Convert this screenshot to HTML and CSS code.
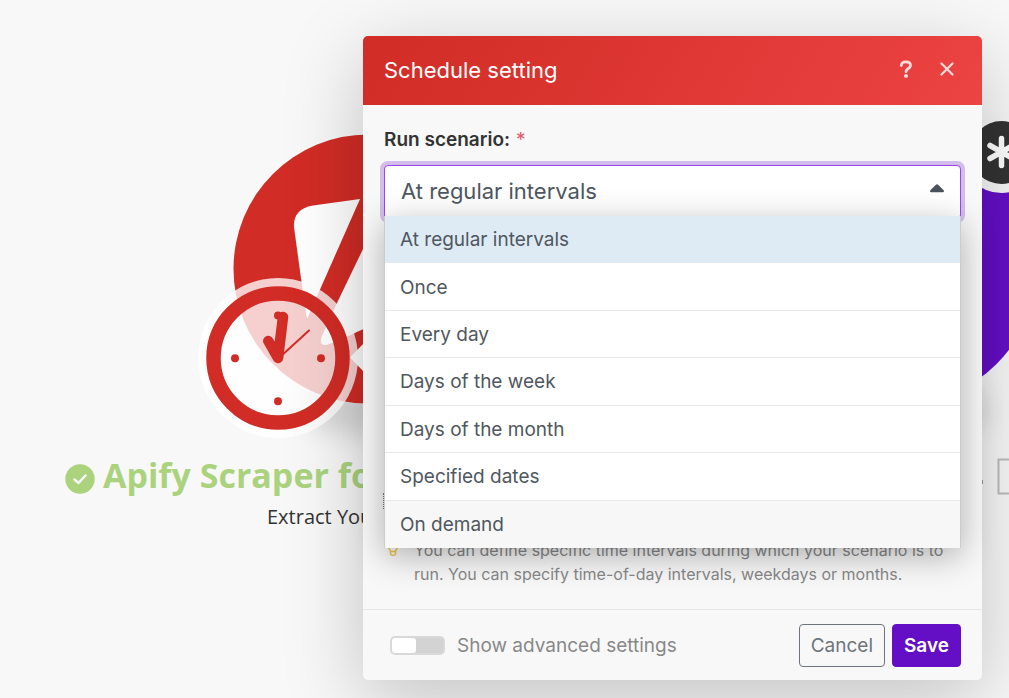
FILE: index.html
```html
<!DOCTYPE html>
<html lang="en">
<head>
<meta charset="utf-8">
<title>Schedule setting</title>
<link rel="stylesheet" href="styles.css">
</head>
<body>
<main class="stage">
  <div class="canvas">
    <svg class="canvas-art" width="1040" height="698" viewBox="0 0 1040 698" aria-hidden="true">
      <defs>
        <filter id="soft" x="-50%" y="-50%" width="200%" height="200%"><feGaussianBlur stdDeviation="14"/></filter>
      </defs>
      <ellipse cx="376" cy="410" rx="70" ry="26" fill="#000" opacity=".14" filter="url(#soft)"/>
      <ellipse cx="909" cy="410" rx="80" ry="26" fill="#000" opacity=".14" filter="url(#soft)"/>
      <circle cx="368" cy="269" r="134.500" fill="#d12c25"/>
      <path d="M360 199L313 205.500Q293 209 294 227L301.500 282L307 319Z" fill="#fff"/>
      <path d="M390 193L336.500 304L321.500 337Q319 346 326 345Q334 343 355 333Q363 328 390 322Z" fill="#fff"/>
      <circle cx="278" cy="358" r="80" fill="#fff" opacity=".78"/>
      <circle cx="278" cy="358" r="64.500" fill="none" stroke="#d12c25" stroke-width="14.500"/>
      <g fill="#d12c25">
        <circle cx="235" cy="358.300" r="4"/><circle cx="321" cy="358.300" r="4"/>
        <circle cx="278" cy="401.300" r="4"/><circle cx="278" cy="315.500" r="4"/>
      </g>
      <path d="M268.300 341L278 358L283 317" fill="none" stroke="#d12c25" stroke-width="10.500" stroke-linecap="round" stroke-linejoin="round"/>
      <path d="M280 357L309 330.500" stroke="#d12c25" stroke-width="2" stroke-linecap="round"/>
      <path d="M350 357.500L364 343V372Z" fill="#fff"/>
      <circle cx="901.500" cy="269" r="134.500" fill="#640fc6"/>
      <circle cx="1001.500" cy="152.500" r="40.500" fill="#f7f7f7"/>
      <circle cx="1001.500" cy="152.500" r="31.500" fill="#333"/>
      <path d="M1001.500 138.500V165.500M990 145.500L1013 158.500M1013 145.500L990 158.500" stroke="#fff" stroke-width="5.500" stroke-linecap="round"/>
      <path d="M1040 459.500H998.500V493.500H1040" fill="none" stroke="#bcbcbc" stroke-width="2"/>
      <path d="M982 480V484" stroke="#999" stroke-width="2"/>
    </svg>
    <div class="node-label">
      <svg width="30" height="30" viewBox="0 0 30 30" aria-hidden="true"><circle cx="15" cy="15" r="14.700" fill="#abd37e"/><path d="M9.500 15.500L13.500 19L20.500 11.500" fill="none" stroke="#f7f7f7" stroke-width="2.500" stroke-linecap="round" stroke-linejoin="round"/></svg>
      <span>Apify Scraper fo</span>
    </div>
    <div class="node-note">Extract You</div>
  </div>

  <form class="dialog" role="dialog" aria-labelledby="title">
    <header class="dialog-head">
      <h1 id="title">Schedule setting</h1>
      <button type="button" class="head-btn" aria-label="Help"><svg width="14" height="20" viewBox="0 0 14 20"><path d="M2.300 6.500Q2.300 2.800 6.900 2.800Q11.500 2.800 11.500 6.300Q11.500 8.300 9 9.700Q7 10.800 7 12.800" fill="none" stroke="#fbdcdc" stroke-width="2.800" stroke-linecap="round"/><circle cx="7" cy="17" r="2" fill="#fbdcdc"/></svg></button>
      <button type="button" class="head-btn" aria-label="Close"><svg width="14" height="20" viewBox="0 0 14 20"><path d="M1.500 4.500L12.500 15.500M12.500 4.500L1.500 15.500" stroke="#fbdcdc" stroke-width="2.200" stroke-linecap="round"/></svg></button>
    </header>
    <div class="dialog-body">
      <label class="field-label" for="run">Run scenario:<span class="required">*</span></label>
      <div class="field">
        <select id="run" class="field-select"><option>At regular intervals</option></select>
        <svg class="caret" width="14" height="9" viewBox="0 0 14 9" aria-hidden="true"><path d="M5.900 .8Q7 -.2 8.100 .8L13.600 6.300Q14.600 8 12.800 8.300H1.200Q-.6 8 .4 6.300Z" fill="#4a525c"/></svg>
      </div>
      <div class="menu" role="listbox" aria-label="Run scenario">
        <button type="button" class="menu-item selected" role="option" aria-selected="true">At regular intervals</button>
        <button type="button" class="menu-item" role="option">Once</button>
        <button type="button" class="menu-item" role="option">Every day</button>
        <button type="button" class="menu-item" role="option">Days of the week</button>
        <button type="button" class="menu-item" role="option">Days of the month</button>
        <button type="button" class="menu-item" role="option">Specified dates</button>
        <button type="button" class="menu-item hovered" role="option">On demand</button>
      </div>
      <div class="hint">
        <svg class="bulb" width="12" height="17" viewBox="0 0 12 17" aria-hidden="true"><path d="M3.500 11.500Q3 9.500 1.800 8.300A5 5 0 1 1 10.200 8.300Q9 9.500 8.500 11.500ZM3.500 11.500V14Q6 17 8.500 14V11.500" fill="none" stroke="#f0c24f" stroke-width="1.500"/></svg>
        <p>You can define specific time intervals during which your scenario is to run. You can specify time-of-day intervals, weekdays or months.</p>
      </div>
    </div>
    <footer class="dialog-foot">
      <label class="toggle"><input type="checkbox" class="switch">Show advanced settings</label>
      <button type="button" class="btn btn-outline">Cancel</button>
      <button type="submit" class="btn btn-primary">Save</button>
    </footer>
  </form>
</main>
</body>
</html>
```

FILE: styles.css
```css
* { box-sizing: border-box; }
body { margin: 0; background: #f8f8f8; font-family: Inter, "Liberation Sans", sans-serif; }
button, select, input { font: inherit; margin: 0; }
.stage { position: relative; min-height: 100vh; padding: 36px 27px 18px 363px; overflow: hidden; }
.canvas { position: absolute; inset: 0; overflow: hidden; font-family: "Open Sans", "Noto Sans", sans-serif; white-space: nowrap; }
.canvas-art { position: absolute; left: 0; top: 0; }
.node-label { position: absolute; left: 65px; top: 450px; display: flex; align-items: center; gap: 8px; color: #abd37e; font-size: 34px; font-weight: 700; line-height: 50px; }
.node-label svg { margin-top: 8px; }
.node-note { position: absolute; left: 267px; top: 504px; color: #333; font-size: 20px; line-height: 26px; }

.dialog { position: relative; background: #f8f8f8; border-radius: 5px; box-shadow: 0 20px 80px rgba(0, 0, 0, .22); }
.dialog::after { content: ""; position: absolute; left: 20px; top: 457px; height: 16px; border-left: 1px dotted #777; }
.dialog-head { display: flex; align-items: center; gap: 13px; height: 69px; padding: 0 21px; background: linear-gradient(120deg, #d12c25, #ec4343); border-radius: 5px 5px 0 0; }
.dialog-head h1 { flex: 1; margin: 0; padding-bottom: 2px; color: #fff; font-size: 22px; font-weight: 400; line-height: 30px; }
.head-btn { display: flex; padding: 0 7px; background: none; border: 0; }
.head-btn svg { display: block; margin-bottom: 3px; }

.dialog-body { padding: 21px 21px 23px; }
.field-label { display: block; margin-bottom: 12px; color: #333; font-size: 19px; font-weight: 600; line-height: 27px; }
.required { margin-left: 6px; color: #e0566b; font-weight: 400; }
.field { position: relative; }
.field-select { display: block; width: 100%; height: 54px; padding: 0 16px 2px; color: #4f5760; font-size: 22px; appearance: none; background: #fff; border: 1px solid #9a46f0; border-radius: 4px; box-shadow: 0 0 0 4px #d3bdeb; }
.caret { position: absolute; right: 17px; top: 19px; }
.menu { position: relative; z-index: 1; display: grid; grid-auto-rows: 1fr; height: 332px; margin-top: -3px; border: solid #ccc; border-width: 0 1px; background: #fff; box-shadow: 0 8px 32px rgba(0, 0, 0, .3); }
.menu-item { min-height: 0; padding: 2px 15px 0; color: #4f5760; background: #fff; border: 0; border-bottom: 1px solid #e9e9e9; font-size: 19px; line-height: 24px; text-align: left; }
.menu-item.selected { background: #deebf5; border-color: #deebf5; }
.menu-item.hovered { background: #f7f7f7; border-bottom: 0; }
.hint { display: flex; gap: 15px; margin-top: -10px; padding-left: 3px; color: #888; font-size: 16px; line-height: 24px; }
.hint p { flex: 1; margin: 0; }
.bulb { flex: none; margin-top: 2px; }

.dialog-foot { display: flex; align-items: center; gap: 7px; padding: 14px 21px 13px; border-top: 1px solid #e8e8e8; }
.toggle { display: flex; flex: 1; align-items: center; gap: 12px; padding-left: 6px; color: #888; font-size: 19px; line-height: 24px; }
.switch { width: 55px; height: 19px; appearance: none; background: #d3d3d3; border: 2px solid #d9d9d9; border-radius: 5px; }
.switch::before { content: ""; display: block; width: 24px; height: 15px; background: #fff; border-radius: 3px; }
.btn { height: 43px; padding: 0 11px; border: 1px solid #6c757d; border-radius: 4px; font-size: 19px; line-height: 24px; }
.btn-outline { color: #6c757d; background: transparent; }
.btn-primary { color: #fff; background: #640fc6; border-color: #640fc6; font-weight: 600; }
```
